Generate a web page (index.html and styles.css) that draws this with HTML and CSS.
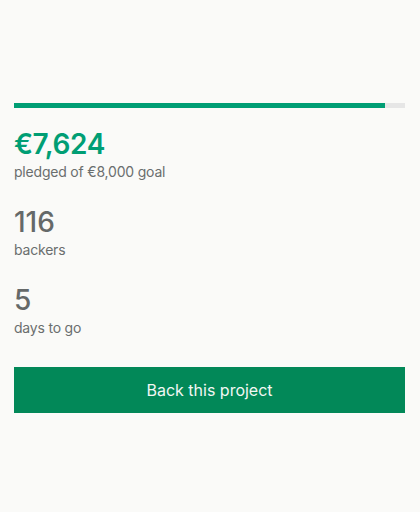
FILE: index.html
```html
<!DOCTYPE html>
<html lang="en">
<head>
    <meta charset="UTF-8">
    <meta name="viewport" content="width=device-width, initial-scale=1.0">
    <title>Back this project</title>
    <link rel="stylesheet" href="styles.css">
</head>
<body>
    <div class="campaign">
        <div class="progress">
            <div class="progress-fill" style="width: 95%"></div>
        </div>

        <div class="stat">
            <div class="stat-value funded">€7,624</div>
            <div class="stat-label">pledged of €8,000 goal</div>
        </div>

        <div class="stat">
            <div class="stat-value">116</div>
            <div class="stat-label">backers</div>
        </div>

        <div class="stat">
            <div class="stat-value">5</div>
            <div class="stat-label">days to go</div>
        </div>

        <button class="btn">Back this project</button>
    </div>
</body>
</html>
```

FILE: styles.css
```css
body {
    font-family: 'Inter', 'Liberation Sans', sans-serif;
    background-color: #fafaf8;
    margin: 0;
}

.campaign {
    padding: 103px 15px 0 14px;
    display: flex;
    flex-direction: column;
}

.progress {
    height: 5px;
    background-color: #e6e6e6;
    margin-bottom: 18px;
}

.progress-fill {
    height: 100%;
    background-color: #009e74;
}

.stat {
    margin-bottom: 22px;
}

.stat-value {
    font-size: 28px;
    line-height: 36px;
    font-weight: 500;
    color: #656969;
}

.stat-value.funded {
    font-weight: 600;
    letter-spacing: -0.4px;
    color: #009e74;
}

.stat-label {
    font-size: 14px;
    line-height: 20px;
    letter-spacing: -0.2px;
    color: #6a6e6e;
}

.btn {
    margin-top: 7px;
    height: 46px;
    border: none;
    background-color: #028858;
    color: #f2f7f4;
    font-family: inherit;
    font-size: 16px;
    cursor: pointer;
}
```
